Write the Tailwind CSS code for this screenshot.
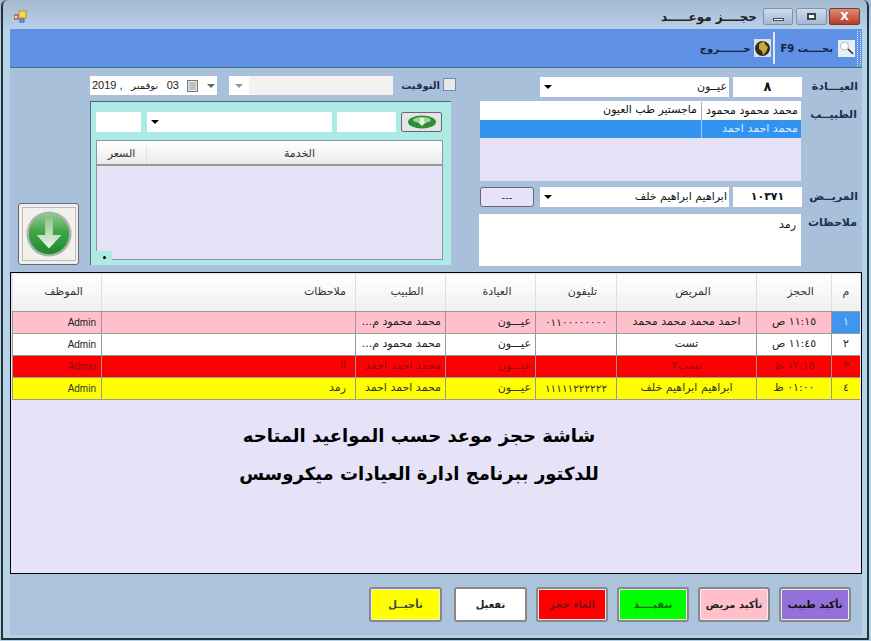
<!DOCTYPE html>
<html lang="ar">
  <head>
    <meta charset="UTF-8" />
    <title>حجز موعد</title>
    <script src="https://cdn.jsdelivr.net/npm/@tailwindcss/browser@4"></script>
  </head>
  <body class="m-0 overflow-hidden bg-[#a9c3df]">
    <div class="relative flex h-[641px] w-[871px] flex-col overflow-hidden bg-[#b6d2e6] font-['DejaVu_Sans',sans-serif] text-[11px] text-[#111]">
      <!-- title bar -->
      <div class="flex h-[29px] items-center justify-between bg-gradient-to-b from-[#a4b9d0] to-[#b9d0ea] pl-[14px] pr-[11px] pt-[4px]">
        <svg width="13" height="13" viewBox="0 0 13 13">
          <rect x="0" y="5" width="4" height="4" fill="#e8e0d0" stroke="#b02020" />
          <rect x="5" y="1" width="7" height="7" fill="#f8d850" stroke="#c09020" />
          <rect x="6" y="9" width="4" height="3" fill="#80a0e0" stroke="#4060a0" />
        </svg>
        <div class="flex items-center">
          <span dir="rtl" class="mr-[6px] text-[12px] font-bold text-[#222]">حجــــز موعـــــد</span>
          <button class="flex h-[17px] w-[30px] items-end justify-center rounded-[2px] border border-[#7f93aa] bg-gradient-to-b from-[#cfdcec] to-[#a3b9d2] pb-[3px]"><span class="h-[3px] w-[11px] border border-[#444] bg-white"></span></button>
          <button class="ml-[3px] flex h-[17px] w-[31px] items-center justify-center rounded-[2px] border border-[#7f93aa] bg-gradient-to-b from-[#cfdcec] to-[#a3b9d2]"><span class="h-[7px] w-[9px] border-2 border-[#444] bg-white"></span></button>
          <button class="ml-[2px] flex h-[17px] w-[31px] items-center justify-center rounded-[2px] border border-[#7a3a30] bg-gradient-to-b from-[#dc8a78] to-[#b83a24] text-[11px] font-bold leading-none text-white">X</button>
        </div>
      </div>

      <div class="mx-[10px] flex w-[852px] flex-1 flex-col">
        <!-- toolbar -->
        <div class="flex h-[39px] items-center justify-end border-b border-[#3f6f7c] bg-[#5f92e6] pr-[1px]">
          <div class="flex items-center text-[10px] font-bold text-[#16233f]">
            <span dir="rtl" class="mr-[3px]">خـــــــروج</span>
            <svg width="17" height="18" viewBox="0 0 17 18" class="bg-[#d8e0ec]">
              <circle cx="8.5" cy="9.5" r="7.5" fill="#2f2c1c" />
              <path d="M5 5l5-3 1 3 3 3-2 5-3 3-1-4-3-2z" fill="#c9a63c" />
            </svg>
            <span class="ml-[2px] mr-[6px] h-[32px] w-[2px] bg-[#dde8f8]"></span>
            <span dir="rtl" class="mr-[5px]">بحــــث F9</span>
            <svg width="17" height="17" viewBox="0 0 17 17" class="bg-[#e6eef8]">
              <circle cx="6.5" cy="6" r="4" fill="#fff" stroke="#b8b8b8" />
              <path d="M10 9l5 5" stroke="#333" stroke-width="1.6" />
            </svg>
            <span class="ml-[2px] h-[35px] w-[4px] border-x border-dotted border-[#dde8f8]"></span>
          </div>
        </div>

        <!-- form area -->
        <div class="flex h-[204px] bg-[#a9c0da]">
          <div class="flex h-[197px] w-[80px] flex-col justify-end pl-[8px]">
            <button class="flex h-[62px] w-[61px] items-center justify-center rounded-[3px] border border-[#667] bg-[#f1f0ec]">
              <span class="flex h-[54px] w-[54px] items-center justify-center border border-[#bbb]">
                <svg width="46" height="46" viewBox="0 0 48 48">
                  <defs>
                    <linearGradient id="ball" x1="0" y1="0" x2="0" y2="1">
                      <stop offset="0" stop-color="#8ecb8e" />
                      <stop offset="0.45" stop-color="#3fa544" />
                      <stop offset="1" stop-color="#1f8a2a" />
                    </linearGradient>
                    <linearGradient id="arrow" x1="0" y1="0" x2="0" y2="1">
                      <stop offset="0" stop-color="#8fc48f" />
                      <stop offset="1" stop-color="#eef4ea" />
                    </linearGradient>
                  </defs>
                  <circle cx="24" cy="24" r="23.5" fill="#aab2aa" />
                  <circle cx="24" cy="24" r="21" fill="url(#ball)" />
                  <path d="M20 7h8v18h9L24 39 11 25h9z" fill="url(#arrow)" />
                </svg>
              </span>
            </button>
          </div>

          <!-- middle column -->
          <div class="flex w-[362px] flex-col">
            <div class="flex h-[33px] items-start pt-[8px]">
              <div class="flex h-[19px] w-[127px] shrink-0 items-center justify-between bg-white px-[2px] text-[#222]" dir="ltr">
                <span class="font-['Liberation_Sans',sans-serif]">2019 ,</span>
                <span class="text-[10px]">نوفمبر</span>
                <span class="font-['Liberation_Sans',sans-serif]">03</span>
                <svg width="11" height="12" viewBox="0 0 11 12"><rect x="0.5" y="0.5" width="10" height="11" fill="#e8e8e8" stroke="#777" /><path d="M2 3h7M2 5h7M2 7h7M2 9h7" stroke="#999" /></svg>
                <span class="border-x-[4px] border-t-[4px] border-x-transparent border-t-[#666]"></span>
              </div>
              <div class="ml-[12px] flex h-[19px] w-[164px] shrink-0 items-center bg-[#f4f2ee]">
                <span class="flex h-full w-[20px] items-center justify-center bg-white"><span class="border-x-[4px] border-t-[4px] border-x-transparent border-t-[#999]"></span></span>
              </div>
              <span dir="rtl" class="ml-[9px] w-[38px] shrink-0 text-[10px] font-bold leading-[19px] text-[#1c2f50]">التوقيت</span>
              <span class="ml-[3px] mt-[2px] h-[13px] w-[13px] shrink-0 border border-[#7a8a9a] bg-[#e8e8e8]"></span>
            </div>
            <div class="relative h-[164px] w-[361px] border-l border-t border-[#4c6a78] bg-[#aeeae4] pl-[5px] pr-[8px] pt-[10px]">
              <div class="flex h-[20px] items-center">
                <span class="h-[20px] w-[45px] bg-white"></span>
                <div class="ml-[6px] flex h-[20px] w-[185px] items-center bg-white pl-[4px]"><span class="border-x-[4px] border-t-[4px] border-x-transparent border-t-black"></span></div>
                <span class="ml-[5px] h-[20px] w-[59px] bg-white"></span>
                <button class="ml-[5px] flex h-[20px] w-[41px] items-center justify-center rounded-[2px] border border-[#667] bg-[#e4e4e0]">
                  <svg width="30" height="14" viewBox="0 0 30 14"><ellipse cx="15" cy="7" rx="14" ry="6.5" fill="#2d8c35" /><ellipse cx="15" cy="5" rx="9" ry="3" fill="#9fd69f" /><path d="M13 3h4v4h2l-4 4-4-4h2z" fill="#e8f4e4" /></svg>
                </button>
              </div>
              <div class="mt-[8px] h-[120px] w-[347px] border border-[#7f9aa4] bg-[#e6e3f8]">
                <div dir="rtl" class="flex h-[25px] border-b-2 border-[#999] bg-gradient-to-b from-white to-[#ebebeb] pt-[5px] text-[#333]">
                  <span class="flex-1 pl-[10px] text-center">الخدمة</span>
                  <span class="w-[50px] border-r border-[#ddd] text-center">السعر</span>
                </div>
              </div>
              <span class="absolute bottom-[1px] left-[5px] flex h-[13px] w-[16px] items-center justify-center bg-[#aeeae4]"><span class="h-[3px] w-[3px] rounded-full bg-black"></span></span>
            </div>
          </div>

          <!-- right column -->
          <div class="ml-[26px] flex w-[384px] flex-col pt-[9px]">
            <div class="flex h-[20px] items-center">
              <div class="ml-[62px] flex h-[20px] w-[189px] items-center justify-between bg-white pl-[4px] pr-[2px]">
                <span class="border-x-[4px] border-t-[4px] border-x-transparent border-t-black"></span>
                <span dir="rtl">عيــون</span>
              </div>
              <span class="ml-[4px] flex h-[20px] w-[69px] items-center justify-center bg-white text-[13px] font-bold">٨</span>
              <span dir="rtl" class="ml-[8px] w-[48px] font-bold text-[#1c2f50]">العيـــادة</span>
            </div>
            <div class="mt-[4px] flex">
              <div class="ml-[2px] h-[80px] w-[321px] bg-[#e6e3f8]" dir="rtl">
                <div class="flex h-[19px] items-center bg-white">
                  <span class="w-[100px] shrink-0 overflow-hidden whitespace-nowrap border-l border-[#aaa] pr-[3px] leading-[18px]">محمد محمود محمود</span>
                  <span class="pr-[4px]">ماجستير طب العيون</span>
                </div>
                <div class="flex h-[18px] items-center bg-[#3393f0] text-[#dbeeff]">
                  <span class="w-[100px] shrink-0 border-l border-[#9cc8ee] pr-[3px] leading-[18px]">محمد احمد احمد</span>
                </div>
              </div>
              <span dir="rtl" class="ml-[8px] mt-[6px] w-[48px] font-bold text-[#1c2f50]">الطبيــب</span>
            </div>
            <div class="mt-[6px] flex h-[20px] items-center">
              <button class="ml-[2px] h-[20px] w-[54px] rounded-[3px] border border-[#667] bg-[#e6e3f8] text-[10px] text-[#333]">---</button>
              <div class="ml-[6px] flex h-[20px] w-[189px] items-center justify-between bg-white pl-[4px] pr-[2px]">
                <span class="border-x-[4px] border-t-[4px] border-x-transparent border-t-black"></span>
                <span dir="rtl">ابراهيم ابراهيم خلف</span>
              </div>
              <span class="ml-[4px] flex h-[20px] w-[69px] items-center justify-center bg-white font-bold">١٠٣٧١</span>
              <span dir="rtl" class="ml-[8px] w-[48px] font-bold text-[#1c2f50]">المريــض</span>
            </div>
            <div class="mt-[7px] flex">
              <div dir="rtl" class="ml-[1px] h-[52px] w-[322px] bg-white pr-[5px] pt-[3px]">رمد</div>
              <span dir="rtl" class="ml-[8px] mt-[1px] w-[48px] whitespace-nowrap font-bold text-[#1c2f50]">ملاحظات</span>
            </div>
          </div>
        </div>

        <!-- appointments grid -->
        <div class="flex h-[302px] flex-col border border-black bg-[#e6e3f8] pl-[1px] pr-[1px]" dir="rtl">
          <div id="grid"></div>
          <div class="mt-[22px] flex flex-col items-center gap-[10px] pr-[34px] text-[18px] font-bold leading-[28px] text-black">
            <p>شاشة حجز موعد حسب المواعيد المتاحه</p>
            <p>للدكتور ببرنامج ادارة العيادات ميكروسس</p>
          </div>
        </div>

        <!-- action buttons -->
        <div class="flex h-[61px] items-start justify-end gap-[9px] bg-[#abc4dc] pr-[11px] pt-[13px] text-[10px] font-bold" dir="ltr">
          <button class="h-[35px] w-[73px] rounded-[3px] border-2 border-[#888] bg-[#ffff00] text-[#444] shadow-[inset_0_0_0_1px_#eee]">تأجيــل</button>
          <button class="ml-[3px] h-[35px] w-[73px] rounded-[3px] border-2 border-[#888] bg-white text-[#222]">تفعيل</button>
          <button class="h-[35px] w-[72px] rounded-[3px] border-2 border-[#888] bg-[#ff0000] text-[#7a1010] shadow-[inset_0_0_0_1px_#eee]">الغاء حجز</button>
          <button class="h-[35px] w-[72px] rounded-[3px] border-2 border-[#888] bg-[#00ff00] text-[#116611] shadow-[inset_0_0_0_1px_#eee]">تنفيــــذ</button>
          <button class="h-[35px] w-[72px] rounded-[3px] border-2 border-[#888] bg-[#ffc0cb] text-[#222] shadow-[inset_0_0_0_1px_#eee]">تأكيد مريض</button>
          <button class="h-[35px] w-[72px] rounded-[3px] border-2 border-[#888] bg-[#9370db] text-[#111] shadow-[inset_0_0_0_1px_#eee]">تأكيد طبيب</button>
        </div>
      </div>

      <!-- window frame -->
      <div class="pointer-events-none absolute bottom-[1px] left-[1px] right-[2px] top-0 rounded-t-[6px] border-x-2 border-b-2 border-[#26323a]"></div>
    </div>

    <script>
      const rows = [
        { bg: "bg-[#ffc0cb] text-[#222]", no: "١", time: "١١:١٥ ص", patient: "احمد محمد محمد محمد", phone: "٠١١٠٠٠٠٠٠٠٠", clinic: "عيـــون", doctor: "محمد محمود م...", notes: "", user: "Admin", noBg: "bg-[#3f96ee] text-[#d8ecff]" },
        { bg: "bg-white text-[#222]", no: "٢", time: "١١:٤٥ ص", patient: "تست", phone: "", clinic: "عيـــون", doctor: "محمد محمود م...", notes: "", user: "Admin", noBg: "" },
        { bg: "bg-[#ff0000] text-[#8a1010]", no: "٣", time: "١٢:١٥ ظ", patient: "تست٢", phone: "", clinic: "عيـــون", doctor: "محمد احمد احمد", notes: "ll", user: "Admin", noBg: "" },
        { bg: "bg-[#ffff00] text-[#333]", no: "٤", time: "٠١:٠٠ ظ", patient: "ابراهيم ابراهيم خلف", phone: "١١١١١٢٢٢٢٢٢", clinic: "عيـــون", doctor: "محمد احمد احمد", notes: "رمد", user: "Admin", noBg: "" },
      ];
      const cols = "grid grid-cols-[29px_75px_140px_81px_90px_90px_254px_89px]";
      const cell = "flex items-center border-l border-b border-[#999] overflow-hidden whitespace-nowrap";
      const head = ["م", "الحجز", "المريض", "تليفون", "العيادة", "الطبيب", "ملاحظات", "الموظف"];

      document.getElementById("grid").innerHTML =
        `<div class="${cols} mt-[1px] h-[38px] border-b border-[#999] bg-gradient-to-b from-white to-[#f0f0f0] text-[#333]">` +
        head
          .map((h, i) =>
            i == 6
              ? `<div class="flex items-center border-l border-[#dde] pr-[9px]">${h}</div>`
              : `<div class="flex items-center justify-center border-l border-[#dde] ${i == 0 ? "" : "pl-[13px]"}">${h}</div>`
          )
          .join("") +
        `</div>` +
        rows
          .map(
            (r) => `
          <div class="${cols} h-[22px] ${r.bg}">
            <div class="${cell} justify-center ${r.noBg}">${r.no}</div>
            <div class="${cell} justify-center">${r.time}</div>
            <div class="${cell} justify-center">${r.patient}</div>
            <div class="${cell} justify-center text-[10.5px]">${r.phone}</div>
            <div class="${cell} pr-[4px]">${r.clinic}</div>
            <div class="${cell} pr-[4px]">${r.doctor}</div>
            <div class="${cell} pr-[9px]">${r.notes}</div>
            <div class="${cell} pr-[5px]"><span dir="ltr" class="font-['Liberation_Sans',sans-serif] text-[10px]">${r.user}</span></div>
          </div>`
          )
          .join("");
    </script>
  </body>
</html>
